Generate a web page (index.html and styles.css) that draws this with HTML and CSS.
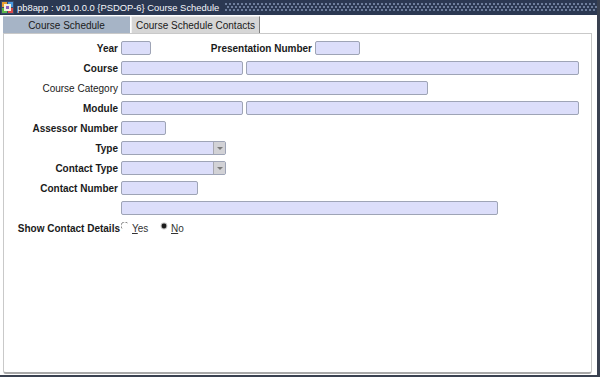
FILE: index.html
```html
<!DOCTYPE html>
<html>
<head>
<meta charset="utf-8">
<link rel="stylesheet" href="styles.css">
</head>
<body>
<div class="window">
  <div class="titlebar">
    <svg class="appicon" width="13" height="13" viewBox="0 0 13 13">
      <rect x="0" y="0" width="13" height="13" fill="#3a4a6a"/>
      <rect x="1" y="1" width="5" height="5" fill="#e8a030"/>
      <rect x="7" y="1" width="5" height="5" fill="#4a9ae0"/>
      <rect x="1" y="7" width="5" height="5" fill="#5cb84a"/>
      <rect x="7" y="7" width="5" height="5" fill="#d84a4a"/>
      <rect x="3" y="3" width="7" height="7" fill="#f4f0e0"/>
      <rect x="5" y="5" width="3" height="3" fill="#8a5ac0"/>
    </svg>
    <span class="title">pb8app : v01.0.0.0 {PSDOP-6} Course Schedule</span>
    <div class="dots"></div>
  </div>
  <div class="tabs">
    <div class="tab tab-inactive">Course Schedule</div>
    <div class="tab tab-active">Course Schedule Contacts</div>
  </div>
  <div class="panel">
    <div class="row">
      <span class="lbl b">Year</span><span class="fld w-year"></span>
      <span class="lbl-pres b">Presentation Number</span><span class="fld w-pres"></span>
    </div>
    <div class="row">
      <span class="lbl b">Course</span><span class="fld w-code"></span><span class="fld w-desc"></span>
    </div>
    <div class="row">
      <span class="lbl">Course Category</span><span class="fld w-cat"></span>
    </div>
    <div class="row">
      <span class="lbl b">Module</span><span class="fld w-code"></span><span class="fld w-desc"></span>
    </div>
    <div class="row">
      <span class="lbl b">Assessor Number</span><span class="fld w-ass"></span>
    </div>
    <div class="row">
      <span class="lbl b">Type</span><span class="fld sel w-sel"><span class="ddbtn"><span class="tri"></span></span></span>
    </div>
    <div class="row">
      <span class="lbl b">Contact Type</span><span class="fld sel w-sel"><span class="ddbtn"><span class="tri"></span></span></span>
    </div>
    <div class="row">
      <span class="lbl b">Contact Number</span><span class="fld w-cnum"></span>
    </div>
    <div class="row">
      <span class="lbl"></span><span class="fld w-long"></span>
    </div>
    <div class="row row-radio">
      <span class="lbl b lbl-show">Show Contact Details</span>
      <span class="radio">
        <svg width="8" height="8" viewBox="0 0 8 8"><path d="M1 6.5 A3.5 3.5 0 0 1 6.5 1" fill="none" stroke="#8a8a8a" stroke-width="1"/></svg>
      </span>
      <span class="rtext"><u>Y</u>es</span>
      <span class="radio radio-on">
        <svg width="8" height="8" viewBox="0 0 8 8"><circle cx="4" cy="4" r="3.4" fill="#bdbdbd"/><circle cx="4" cy="4" r="2.4" fill="#1a1a1a"/></svg>
      </span>
      <span class="rtext"><u>N</u>o</span>
    </div>
  </div>
</div>
</body>
</html>
```

FILE: styles.css
```css
html, body {
  margin: 0;
  padding: 0;
  background: #ffffff;
}
body {
  font-family: "Liberation Sans", Arial, sans-serif;
  font-size: 10px;
  color: #1a1a1a;
}
.window {
  width: 597px;
  height: 375px;
  border-right: 3px solid #3a4150;
  border-bottom: 2px solid #3a4150;
  background: #ffffff;
  display: flex;
  flex-direction: column;
}
.titlebar {
  height: 15px;
  background: #2b3852;
  display: flex;
  align-items: center;
  color: #ffffff;
  flex: none;
}
.appicon {
  margin-left: 1px;
  margin-right: 3px;
  flex: none;
}
.title {
  font-size: 9.4px;
  white-space: nowrap;
  color: #f4f6fa;
}
.dots {
  flex: 1;
  height: 9px;
  margin-left: 6px;
  background-color: #2b3852;
  background-image:
    radial-gradient(circle at 1px 1px, #6e7e9c 0.8px, transparent 1px),
    radial-gradient(circle at 3px 4px, #6e7e9c 0.8px, transparent 1px);
  background-size: 4px 6px, 4px 6px;
}
.tabs {
  display: flex;
  height: 17px;
  margin-top: 1px;
  padding-left: 3px;
  flex: none;
}
.tab {
  width: 127px;
  display: flex;
  align-items: center;
  justify-content: center;
  font-size: 10px;
  color: #1a1a1a;
}
.tab-inactive {
  background: #a6b4c6;
  border-top: 1px solid #c4cedb;
}
.tab-active {
  background: #d6d6d6;
  margin-left: 1px;
  border-top: 1px solid #ececec;
  border-right: 1px solid #7f7f7f;
  border-left: 1px solid #f2f2f2;
}
.panel {
  margin-left: 3px;
  width: 589px;
  flex: 1;
  border: 1px solid #c9c9c9;
  border-bottom: 2px solid #a8a8a8;
  border-radius: 0 0 3px 3px;
  padding-top: 7px;
  box-sizing: border-box;
  margin-bottom: 1px;
}
.row {
  display: flex;
  align-items: center;
  height: 14px;
  margin-bottom: 6px;
}
.lbl {
  width: 114px;
  text-align: right;
  padding-right: 3px;
  white-space: nowrap;
  flex: none;
}
.b {
  font-weight: bold;
}
.lbl-pres {
  width: 158px;
  text-align: right;
  padding-right: 3px;
  white-space: nowrap;
  flex: none;
}
.fld {
  display: block;
  height: 14px;
  box-sizing: border-box;
  background: #dcdefa;
  border: 1px solid #9ea4b6;
  border-radius: 2px;
  flex: none;
  margin-right: 3px;
}
.w-year { width: 30px; }
.w-pres { width: 45px; }
.w-code { width: 122px; }
.w-desc { width: 333px; }
.w-cat { width: 307px; }
.w-ass { width: 45px; }
.w-sel { width: 105px; }
.w-cnum { width: 77px; }
.w-long { width: 377px; }
.sel {
  position: relative;
}
.ddbtn {
  position: absolute;
  right: 0;
  top: 0;
  width: 11px;
  height: 12px;
  background: #d2d2d6;
  border-left: 1px solid #a9a9b2;
  display: flex;
  align-items: center;
  justify-content: center;
}
.tri {
  width: 0;
  height: 0;
  border-left: 3px solid transparent;
  border-right: 3px solid transparent;
  border-top: 3px solid #7a7a7a;
}
.row-radio {
  margin-top: 2px;
}
.lbl-show {
  padding-right: 1px;
  width: 116px;
}
.radio {
  width: 8px;
  height: 8px;
  display: block;
  margin-top: -4px;
  flex: none;
}
.radio svg {
  display: block;
}
.rtext {
  color: #333333;
  margin-left: 3px;
  width: 28px;
}
.radio-on {
  margin-left: 0;
}
```
